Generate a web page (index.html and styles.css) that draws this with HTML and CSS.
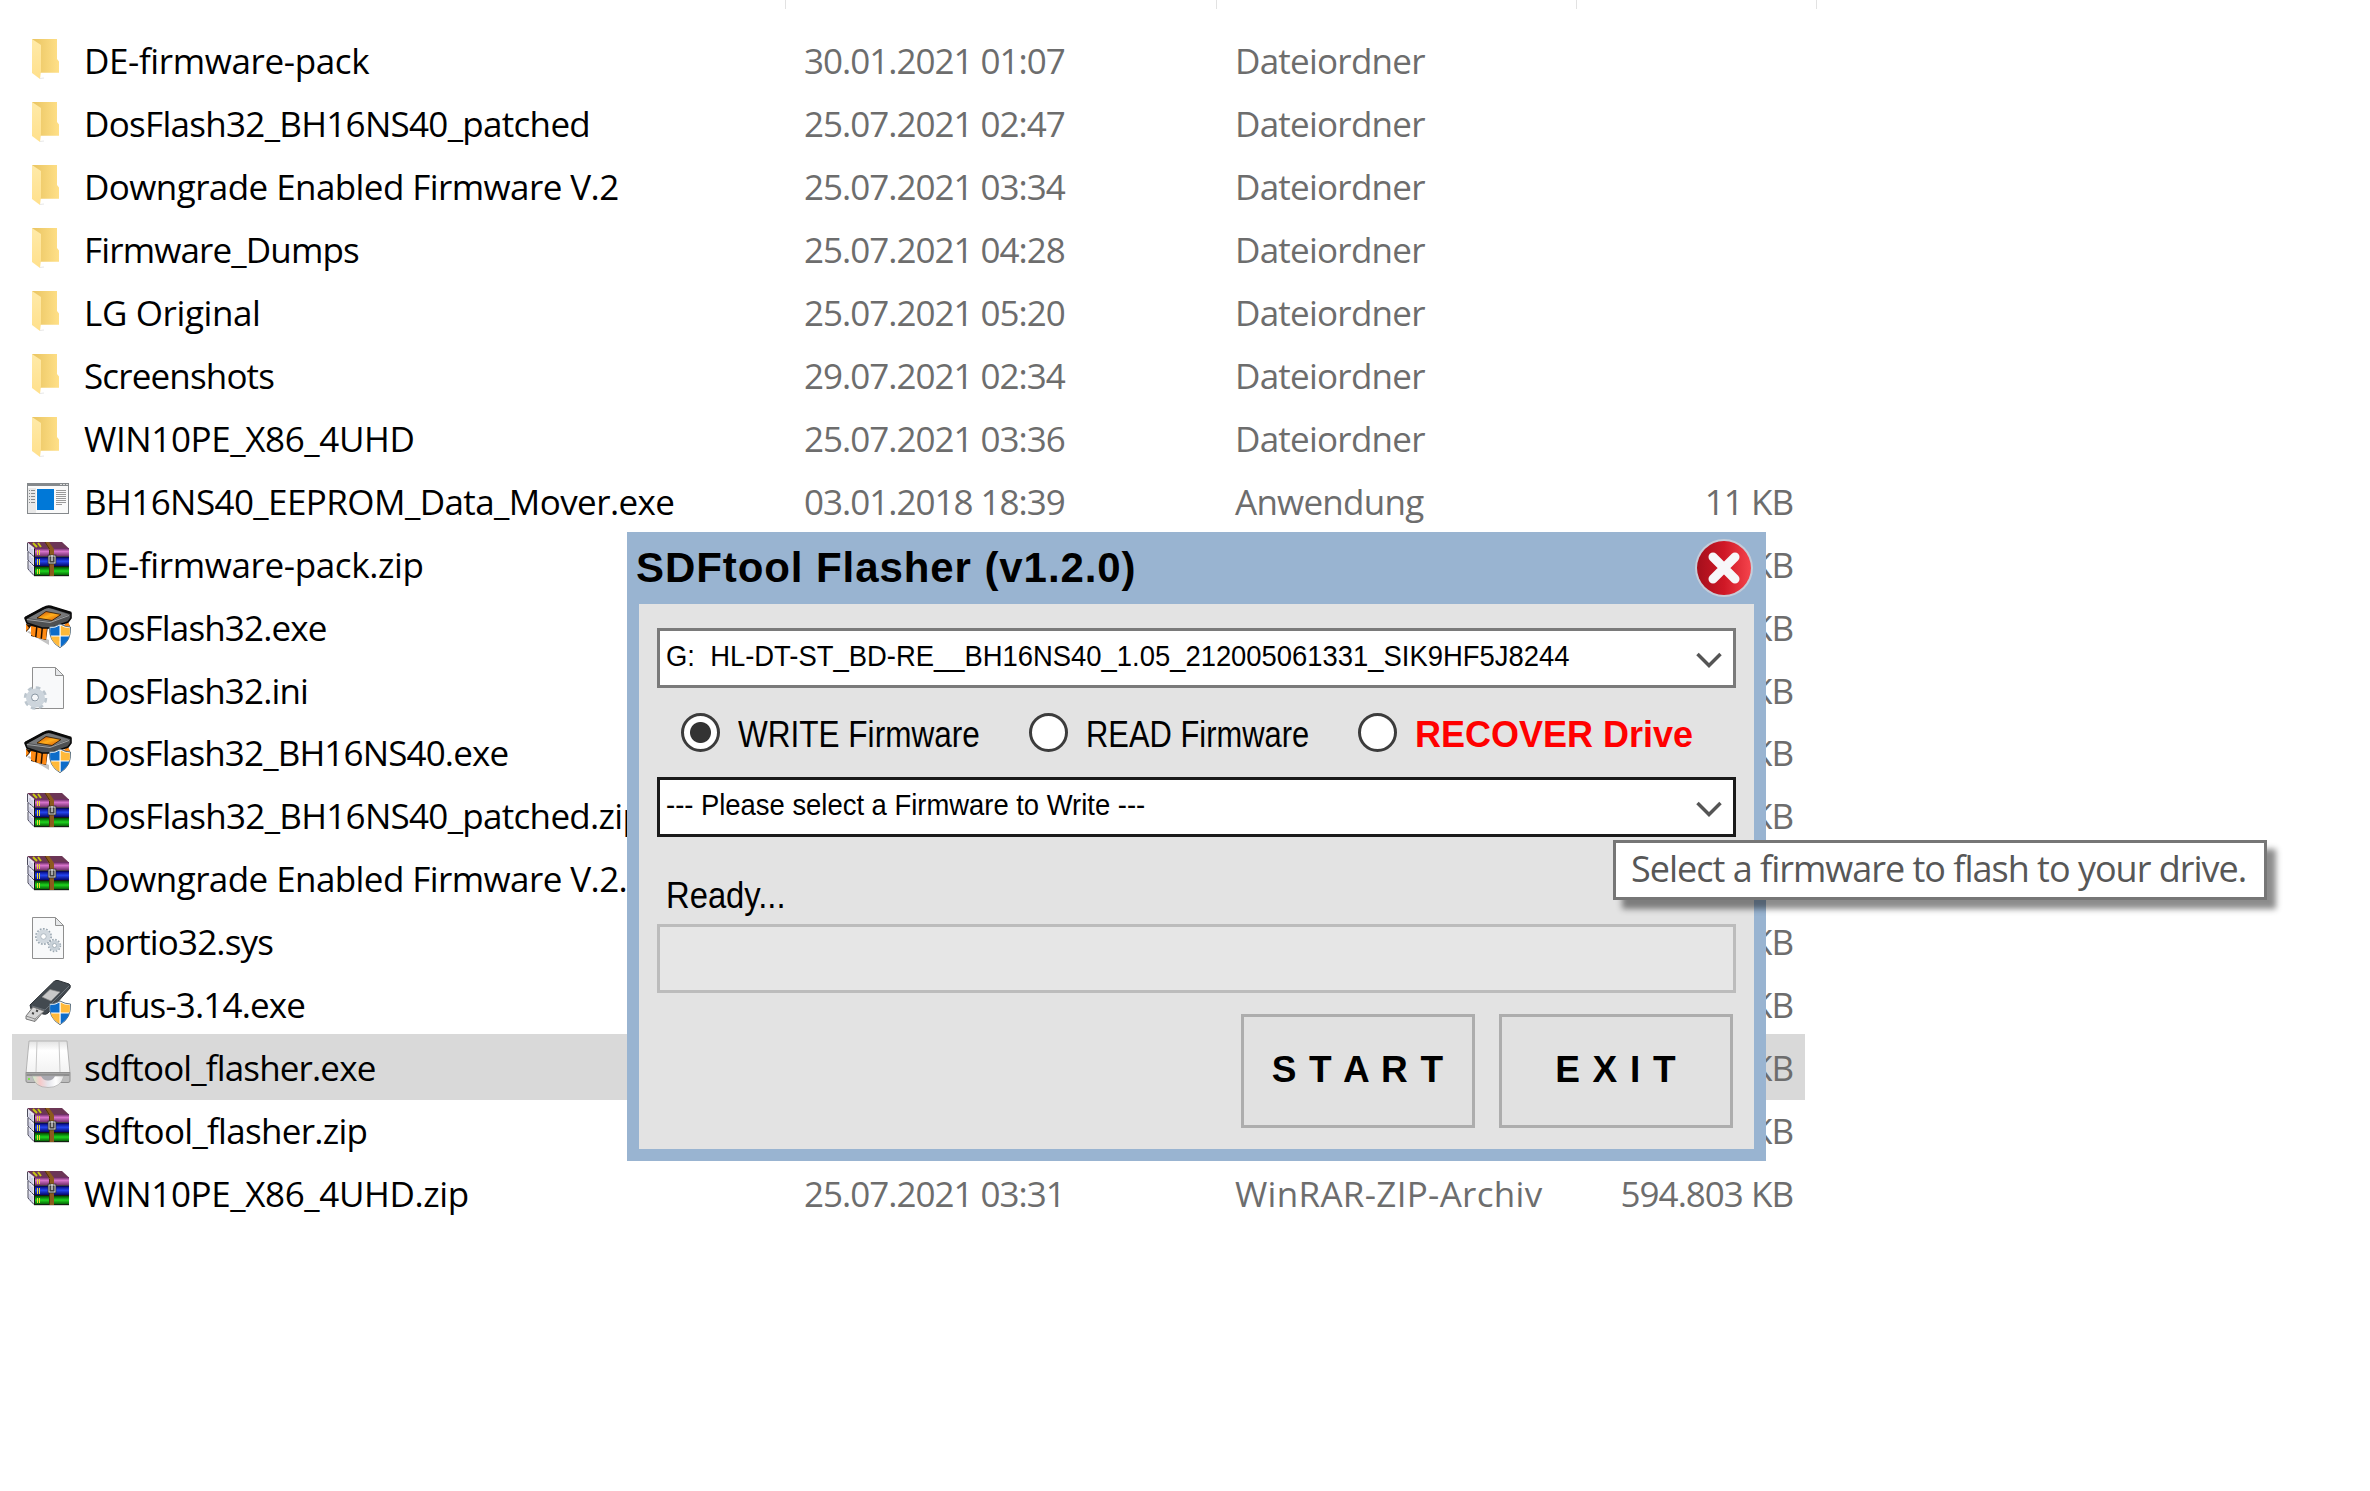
FILE: index.html
```html
<!DOCTYPE html>
<html lang="de">
<head>
    <meta charset="UTF-8">
    <meta name="viewport" content="width=device-width, initial-scale=1.0">
    <title>SDFtool Flasher</title>
    <link rel="stylesheet" href="styles.css">
</head>
<body>
    <!-- Icons -->
    <svg class="sprite" width="0" height="0">
        <defs>
            <linearGradient id="gBack" x1="0" y1="0" x2="1" y2="0"><stop offset="0" stop-color="#e9c461"/><stop offset="1" stop-color="#ffe088"/></linearGradient>
            <linearGradient id="gFront" x1="0" y1="0" x2="0" y2="1"><stop offset="0" stop-color="#ffeaa8"/><stop offset="1" stop-color="#ffe08c"/></linearGradient>
            <linearGradient id="gPurple" x1="0" y1="0" x2="0" y2="1"><stop offset="0" stop-color="#5e2357"/><stop offset=".4" stop-color="#d874cc"/><stop offset="1" stop-color="#6b2a63"/></linearGradient>
            <linearGradient id="gBlue" x1="0" y1="0" x2="0" y2="1"><stop offset="0" stop-color="#00006e"/><stop offset=".45" stop-color="#2546f0"/><stop offset="1" stop-color="#00005c"/></linearGradient>
            <linearGradient id="gGreen" x1="0" y1="0" x2="0" y2="1"><stop offset="0" stop-color="#004b00"/><stop offset=".45" stop-color="#1fd41f"/><stop offset="1" stop-color="#004800"/></linearGradient>
            <linearGradient id="gChip" x1="0" y1="0" x2="1" y2="1"><stop offset="0" stop-color="#c23a00"/><stop offset=".5" stop-color="#ffb01c"/><stop offset="1" stop-color="#d34d00"/></linearGradient>
            <linearGradient id="gDrive" x1="0" y1="0" x2="0" y2="1"><stop offset="0" stop-color="#e2e2e2"/><stop offset=".3" stop-color="#fff"/><stop offset="1" stop-color="#f2f2f2"/></linearGradient>
            <linearGradient id="gDisc" x1="0" y1="0" x2="1" y2="0"><stop offset="0" stop-color="#c8efcb"/><stop offset=".25" stop-color="#f6c9c9"/><stop offset=".5" stop-color="#e6e6ec"/><stop offset=".75" stop-color="#fff"/><stop offset="1" stop-color="#ddd"/></linearGradient>
            <linearGradient id="gClose" x1="0" y1="0" x2="1" y2="0"><stop offset="0" stop-color="#a50f1c"/><stop offset=".5" stop-color="#cf1826"/><stop offset="1" stop-color="#f5444c"/></linearGradient>
        </defs>
        <symbol id="folder" viewBox="0 0 48 48">
            <path d="M8 4H33V24L35 26.500V37.700H14Z" fill="url(#gBack)"/>
            <path d="M8 4L17 10V36L16 44L8 38Z" fill="url(#gFront)"/>
            <path d="M16 43.500L20 43" stroke="#e8e8e8"/>
        </symbol>
        <symbol id="app" viewBox="0 0 48 48">
            <rect x="3.500" y="7.500" width="41" height="30" fill="#fafafa" stroke="#85898c"/>
            <rect x="3" y="7" width="42" height="3" fill="#85898c"/>
            <path d="M36 8.500h2M39 8.500h2M42 8.500h2" stroke="#dcdcdc"/>
            <rect x="4" y="12" width="8" height="25" fill="#e8e8e8"/>
            <path d="M5 14.500h1M7 14.500h4M5 17.500h1M7 17.500h4M5 20.500h1M7 20.500h4M5 23.500h1M7 23.500h4M5 26.500h1M7 26.500h4" stroke="#85898c"/>
            <rect x="13" y="13" width="17" height="21" fill="#0078d7"/>
            <path d="M32 14.500h10M32 16.500h10M32 18.500h10M32 20.500h10M32 22.500h10M32 24.500h10M32 26.500h10M32 28.500h6" stroke="#999"/>
        </symbol>
        <symbol id="rar" viewBox="0 0 48 48">
            <path d="M3 3L11 10V37L9 36L4 31V23L3 21V13Z" fill="#e4e4f0"/>
            <path d="M3.500 4V12L10 17.500M4 13V21L10 27M4 22V30L10 36.500" fill="none" stroke="#4c4c5c"/>
            <path d="M6 8V14M8 10V16M6 17V23M8 19V25M6 26V32M8 28V34" stroke="#b9b9d4"/>
            <path d="M3 3H38L45 9.500H11Z" fill="#6c3656"/>
            <path d="M9 4L13 8M14 4L17 8" stroke="#c5c514" stroke-width="2"/>
            <rect x="10" y="9" width="35" height="8.500" fill="url(#gPurple)"/>
            <rect x="10" y="18" width="35" height="9.500" fill="url(#gBlue)"/>
            <rect x="10" y="28" width="35" height="9" fill="url(#gGreen)"/>
            <path d="M10 17.800H45M10 27.500H45M10 36.700H45M10.500 10V37" stroke="#171717"/>
            <path d="M13.500 11v5M15.500 11v5M13.500 20v6M15.500 20v6M13.500 30v5M15.500 30v5" stroke="#e8dc2c"/>
            <path d="M21 3H25L30 10V37H25V11Z" fill="#8c5a1e"/>
            <path d="M25.500 11V37M21 3L25.500 10" stroke="#50300c"/>
            <rect x="25" y="17" width="6" height="7" fill="#555" stroke="#222" stroke-width="2.500"/>
            <rect x="25" y="17" width="6" height="7" fill="none" stroke="#ddd"/>
            <path d="M28 16V22" stroke="#fff"/>
        </symbol>
        <symbol id="shield" viewBox="0 0 48 48">
            <path d="M36 22Q41 25 46.500 25Q47.500 39 36 45.700Q24.500 39 25.500 25Q31 25 36 22Z" fill="#fff" stroke="#5d7180" stroke-width="1"/>
            <path d="M35.500 23.500V33.500H26.400Q25.800 29 26.300 26Q31.500 26 35.500 23.500ZM36.700 34.600H45.200Q43.300 41 36.700 44.700Z" fill="#0d6cc9"/>
            <path d="M36.700 23.500V33.500H45.600Q46.200 29 45.700 26Q40.500 26 36.700 23.500ZM35.500 34.600H26.800Q28.700 41 35.500 44.700Z" fill="#ffb93a"/>
        </symbol>
        <symbol id="chip" viewBox="0 0 48 48">
            <path d="M3 30L25 43V38L5 29Z" fill="#c4c4c4"/>
            <path d="M2 22V30L5 27L7 24V34L22 38L24 24L40 24L43 20L46 24V29L42 28" fill="#241000"/>
            <path d="M2 22V29L5 26ZM7 24L12 25L11 35L7 33ZM13.500 25L17.500 26L16.500 36.500L12.500 35.500ZM19 26L23 26L22 37.500L18 37ZM40 23L44 20L46 24V28Z" fill="#ff8a14"/>
            <path d="M1 16L20 6Q24 4 29 5.500L47 11V16L44 20L26 26L18 26L3 21Z" fill="#4e5052" stroke="#0a0a0a" stroke-width="1.600"/>
            <path d="M3 16L21 7Q25 5.500 28 7L45 12.500L27 19.500Z" fill="#77797b"/>
            <path d="M3 17.500L26 20.500L45 13.500" fill="none" stroke="#a0a2a4"/>
            <path d="M13 16L22 9.500L37 12.500L28 18.500Z" fill="url(#gChip)" stroke="#2a1400" stroke-width=".8"/>
            <path d="M1.500 16L20 6Q24 3.500 29 5.500L47 11" fill="none" stroke="#0a0a0a" stroke-width="2.600"/>
            <use href="#shield"/>
        </symbol>
        <symbol id="page" viewBox="0 0 48 48">
            <path d="M8.500 2.500H31L39.500 11V43.500H8.500Z" fill="#f8f9fa" stroke="#8f8f8f"/>
            <path d="M31.500 2.500V10.500H39.500Z" fill="#e6e8ea" stroke="#8f8f8f"/>
        </symbol>
        <symbol id="ini" viewBox="0 0 48 48">
            <use href="#page"/>
            <circle cx="11.500" cy="33" r="9.500" fill="none" stroke="#bcc6ce" stroke-width="4.500" stroke-dasharray="4.200 3.261"/>
            <circle cx="11.500" cy="33" r="6.500" fill="none" stroke="#cdd5dc" stroke-width="6"/>
            <circle cx="11" cy="32.500" r="3.500" fill="#f4f6f8" stroke="#8996a2"/>
        </symbol>
        <symbol id="sys" viewBox="0 0 48 48">
            <use href="#page" y="-1"/>
            <circle cx="19.500" cy="20.500" r="7.500" fill="none" stroke="#9aa7b1" stroke-width="2" stroke-dasharray="1.700 1.441"/>
            <circle cx="19.500" cy="20.500" r="5" fill="none" stroke="#d2d9df" stroke-width="4"/>
            <circle cx="19.500" cy="20.500" r="2.800" fill="#fff" stroke="#9aa7b1" stroke-width=".8"/>
            <circle cx="30.500" cy="29.500" r="5.700" fill="none" stroke="#9aa7b1" stroke-width="2" stroke-dasharray="1.500 1.484"/>
            <circle cx="30.500" cy="29.500" r="3.600" fill="none" stroke="#c8d1d8" stroke-width="3.500"/>
            <circle cx="30.500" cy="29.500" r="2" fill="#fff" stroke="#9aa7b1" stroke-width=".8"/>
        </symbol>
        <symbol id="usb" viewBox="0 0 48 48">
            <path d="M6 26L30 2.500Q32 1 34 1.500L45 5Q47 6 46 9L24 34Q22 36 19 35L7 30Z" fill="#434a50" stroke="#2b3035"/>
            <path d="M8 27L21 31L45 7" fill="none" stroke="#6b737a"/>
            <path d="M18 18L26 10.500L36 13L27 22Z" fill="#c8c8c8" stroke="#888" stroke-width=".7"/>
            <path d="M2 37L9 28L20 32L11 42.500L2 40Z" fill="#d5d5d5" stroke="#777"/>
            <path d="M2 37L11 40L20 32M11 40V42" fill="none" stroke="#8c8c8c"/>
            <path d="M8 34l2 .7M12 31.500l2 .7" stroke="#444" stroke-width="2"/>
            <use href="#shield"/>
        </symbol>
        <symbol id="drive" viewBox="0 0 48 48">
            <path d="M5 -1H43L46 31H2Z" fill="url(#gDrive)" stroke="#b4b4b4"/>
            <path d="M13 -1L12 30M35 -1L36 30" stroke="#c8c8c8"/>
            <path d="M2 30.500H46V39Q46 40.500 44 40.500H4Q2 40.500 2 39Z" fill="#bcbcbc" stroke="#8f8f8f"/>
            <path d="M2.500 31.500H45.500V34H2.500Z" fill="#8e8e8e"/>
            <path d="M8 34H40Q37 45.500 24 45.500Q11 45.500 8 34Z" fill="url(#gDisc)" stroke="#aaa" stroke-width=".7"/>
            <path d="M17 34H31Q29 38.500 24 38.500Q19 38.500 17 34Z" fill="#a9a9b0"/>
            <rect x="4" y="36" width="2" height="2" fill="#7be04e"/>
        </symbol>
    </svg>

    <main class="explorer">
        <div class="columns">
            <span></span><span></span><span></span><span></span>
        </div>
        <div class="files">
            <div class="row"><svg class="icon"><use href="#folder"/></svg><span class="name loose">DE-firmware-pack</span><span class="date">30.01.2021 01:07</span><span class="type">Dateiordner</span><span class="size"></span></div>
            <div class="row"><svg class="icon"><use href="#folder"/></svg><span class="name">DosFlash32_BH16NS40_patched</span><span class="date">25.07.2021 02:47</span><span class="type">Dateiordner</span><span class="size"></span></div>
            <div class="row"><svg class="icon"><use href="#folder"/></svg><span class="name medium">Downgrade Enabled Firmware V.2</span><span class="date">25.07.2021 03:34</span><span class="type">Dateiordner</span><span class="size"></span></div>
            <div class="row"><svg class="icon"><use href="#folder"/></svg><span class="name tight">Firmware_Dumps</span><span class="date">25.07.2021 04:28</span><span class="type">Dateiordner</span><span class="size"></span></div>
            <div class="row"><svg class="icon"><use href="#folder"/></svg><span class="name loose">LG Original</span><span class="date">25.07.2021 05:20</span><span class="type">Dateiordner</span><span class="size"></span></div>
            <div class="row"><svg class="icon"><use href="#folder"/></svg><span class="name tight">Screenshots</span><span class="date">29.07.2021 02:34</span><span class="type">Dateiordner</span><span class="size"></span></div>
            <div class="row"><svg class="icon"><use href="#folder"/></svg><span class="name loose">WIN10PE_X86_4UHD</span><span class="date">25.07.2021 03:36</span><span class="type">Dateiordner</span><span class="size"></span></div>
            <div class="row"><svg class="icon"><use href="#app"/></svg><span class="name medium">BH16NS40_EEPROM_Data_Mover.exe</span><span class="date">03.01.2018 18:39</span><span class="type">Anwendung</span><span class="size">11 KB</span></div>
            <div class="row"><svg class="icon"><use href="#rar"/></svg><span class="name loose">DE-firmware-pack.zip</span><span class="date"></span><span class="type"></span><span class="size">KB</span></div>
            <div class="row"><svg class="icon"><use href="#chip"/></svg><span class="name tight">DosFlash32.exe</span><span class="date"></span><span class="type"></span><span class="size">KB</span></div>
            <div class="row"><svg class="icon"><use href="#ini"/></svg><span class="name tight">DosFlash32.ini</span><span class="date"></span><span class="type"></span><span class="size">KB</span></div>
            <div class="row"><svg class="icon"><use href="#chip"/></svg><span class="name tight">DosFlash32_BH16NS40.exe</span><span class="date"></span><span class="type"></span><span class="size">KB</span></div>
            <div class="row"><svg class="icon"><use href="#rar"/></svg><span class="name">DosFlash32_BH16NS40_patched.zip</span><span class="date"></span><span class="type"></span><span class="size">KB</span></div>
            <div class="row"><svg class="icon"><use href="#rar"/></svg><span class="name medium">Downgrade Enabled Firmware V.2.zip</span><span class="date"></span><span class="type"></span><span class="size">KB</span></div>
            <div class="row"><svg class="icon"><use href="#sys"/></svg><span class="name tight">portio32.sys</span><span class="date"></span><span class="type"></span><span class="size">KB</span></div>
            <div class="row"><svg class="icon"><use href="#usb"/></svg><span class="name tight">rufus-3.14.exe</span><span class="date"></span><span class="type"></span><span class="size">KB</span></div>
            <div class="row selected"><svg class="icon"><use href="#drive"/></svg><span class="name tight">sdftool_flasher.exe</span><span class="date"></span><span class="type"></span><span class="size">KB</span></div>
            <div class="row"><svg class="icon"><use href="#rar"/></svg><span class="name">sdftool_flasher.zip</span><span class="date"></span><span class="type"></span><span class="size">KB</span></div>
            <div class="row"><svg class="icon"><use href="#rar"/></svg><span class="name loose">WIN10PE_X86_4UHD.zip</span><span class="date">25.07.2021 03:31</span><span class="type archive">WinRAR-ZIP-Archiv</span><span class="size">594.803 KB</span></div>
        </div>
    </main>

    <section class="dialog">
        <header class="titlebar">
            <h1>SDFtool Flasher (v1.2.0)</h1>
            <svg class="close" viewBox="0 0 60 60">
                <circle cx="30" cy="30" r="29" fill="#c5ccd9"/>
                <circle cx="30" cy="30" r="27" fill="url(#gClose)"/>
                <path d="M19 19L41 41M41 19L19 41" stroke="#f7f7f9" stroke-width="9" stroke-linecap="round"/>
            </svg>
        </header>
        <div class="panel">
            <div class="combo"><span>G:&nbsp; HL-DT-ST_BD-RE__BH16NS40_1.05_212005061331_SIK9HF5J8244</span>
                <svg class="chevron" viewBox="0 0 26 16"><path d="M1.500 2L13 13.500L24.500 2"/></svg>
            </div>
            <div class="modes">
                <label class="mode write"><i class="radio checked"></i><span>WRITE Firmware</span></label>
                <label class="mode read"><i class="radio"></i><span>READ Firmware</span></label>
                <label class="mode recover"><i class="radio"></i><span>RECOVER Drive</span></label>
            </div>
            <div class="combo focused"><span>--- Please select a Firmware to Write ---</span>
                <svg class="chevron" viewBox="0 0 26 16"><path d="M1.500 2L13 13.500L24.500 2"/></svg>
            </div>
            <div class="status"><span>Ready...</span></div>
            <div class="progress"></div>
            <div class="buttons">
                <button class="btn">S T A R T</button>
                <button class="btn">E X I T</button>
            </div>
        </div>
    </section>

    <div class="tooltip">Select a firmware to flash to your drive.</div>
</body>
</html>
```

FILE: styles.css
```css
body {
    margin: 0;
    width: 2370px;
    height: 1491px;
    overflow: hidden;
    position: relative;
    background-color: #fff;
    font-family: "Open Sans", sans-serif;
}
.sprite {
    position: absolute;
}
.sprite symbol {
    overflow: visible;
}
.columns {
    display: grid;
    grid-template-columns: 786px 431px 360px 240px;
    height: 9px;
}
.columns span {
    border-right: 1px solid #e2e2e2;
}
.files {
    padding: 18px 0 0 12px;
    width: 1793px;
}
.row {
    display: grid;
    grid-template-columns: 60px 720px 431px 330px 1fr;
    height: 66px;
    margin-bottom: -3.06px;
    box-sizing: border-box;
    padding: 0 12px;
    font-size: 35px;
    line-height: 68px;
    white-space: nowrap;
    color: #6d6d6d;
}
.row.selected {
    background-color: #d9d9d9;
}
.icon {
    width: 48px;
    height: 48px;
    margin-top: 8px;
    overflow: visible;
}
.name {
    color: #000;
    letter-spacing: -0.7px;
}
.name.loose {
    letter-spacing: -0.38px;
}
.name.medium {
    letter-spacing: -0.58px;
}
.name.tight {
    letter-spacing: -0.85px;
}
.date {
    letter-spacing: -1px;
}
.type {
    letter-spacing: -0.75px;
}
.type.archive {
    letter-spacing: 0.3px;
}
.size {
    text-align: right;
    letter-spacing: -1px;
}
.dialog {
    position: absolute;
    left: 627px;
    top: 532px;
    width: 1139px;
    height: 629px;
    box-sizing: border-box;
    padding: 0 12px 12px;
    background-color: #99b4d1;
    font-family: "Liberation Sans", Arial, sans-serif;
    color: #000;
    white-space: nowrap;
}
.titlebar {
    display: flex;
    justify-content: space-between;
    align-items: center;
    height: 72px;
}
.titlebar h1 {
    margin: 0 0 0 -3px;
    font-size: 42px;
    line-height: 72px;
    letter-spacing: 0.92px;
}
.close {
    width: 60px;
    height: 60px;
}
.panel {
    height: 545px;
    box-sizing: border-box;
    padding: 24px 18px 0;
    background-color: #e3e3e3;
}
/* Dialog text is slightly condensed */
.combo span,
.write span,
.read span,
.status span {
    display: inline-block;
    transform-origin: left center;
}
.combo {
    display: flex;
    justify-content: space-between;
    height: 60px;
    box-sizing: border-box;
    padding: 0 11px 0 6px;
    border: 3px solid #7a7a7a;
    background-color: #fff;
    font-size: 29px;
    line-height: 50px;
}
.combo span {
    transform: scaleX(0.945);
}
.combo.focused {
    border-color: #1a1a1a;
}
.chevron {
    width: 26px;
    height: 16px;
    margin-top: 21px;
}
.chevron path {
    fill: none;
    stroke: #555;
    stroke-width: 3.5;
}
.modes {
    display: grid;
    grid-template-columns: 348px 329px auto;
    align-items: center;
    height: 89px;
    padding-left: 24px;
    font-size: 36px;
}
.mode {
    display: flex;
    align-items: center;
    gap: 18px;
    height: 39px;
    line-height: 39px;
}
.mode span {
    padding-top: 3px;
}
.write span {
    transform: scaleX(0.876);
}
.read span {
    transform: scaleX(0.858);
}
.radio {
    width: 39px;
    height: 39px;
    box-sizing: border-box;
    border: 3px solid #3c3c3c;
    border-radius: 50%;
    background-color: #fff;
}
.radio.checked {
    background-image: radial-gradient(circle, #333 10px, #fff 11px);
}
.recover {
    color: #ff0000;
    font-weight: bold;
}
.status {
    height: 87px;
    padding-left: 9px;
    font-size: 36px;
    line-height: 118px;
}
.status span {
    transform: scaleX(0.91);
}
.progress {
    height: 69px;
    box-sizing: border-box;
    border: 3px solid #bcbcbc;
    background-color: #e6e6e6;
}
.buttons {
    display: flex;
    justify-content: flex-end;
    gap: 24px;
    padding: 21px 3px 0 0;
}
.btn {
    width: 234px;
    height: 114px;
    padding: 0 0 3px;
    border: 3px solid #adadad;
    border-radius: 0;
    background-color: #e1e1e1;
    font: bold 37px "Liberation Sans", Arial, sans-serif;
    letter-spacing: 1.2px;
    color: #000;
}
.tooltip {
    position: absolute;
    left: 1613px;
    top: 840px;
    width: 654px;
    height: 60px;
    box-sizing: border-box;
    padding-left: 15px;
    border: 3px solid #767676;
    background-color: #fff;
    color: #575757;
    font-size: 36px;
    line-height: 52px;
    letter-spacing: -1px;
    white-space: nowrap;
    box-shadow: 9px 9px 6px rgba(0, 0, 0, 0.45);
}
```
